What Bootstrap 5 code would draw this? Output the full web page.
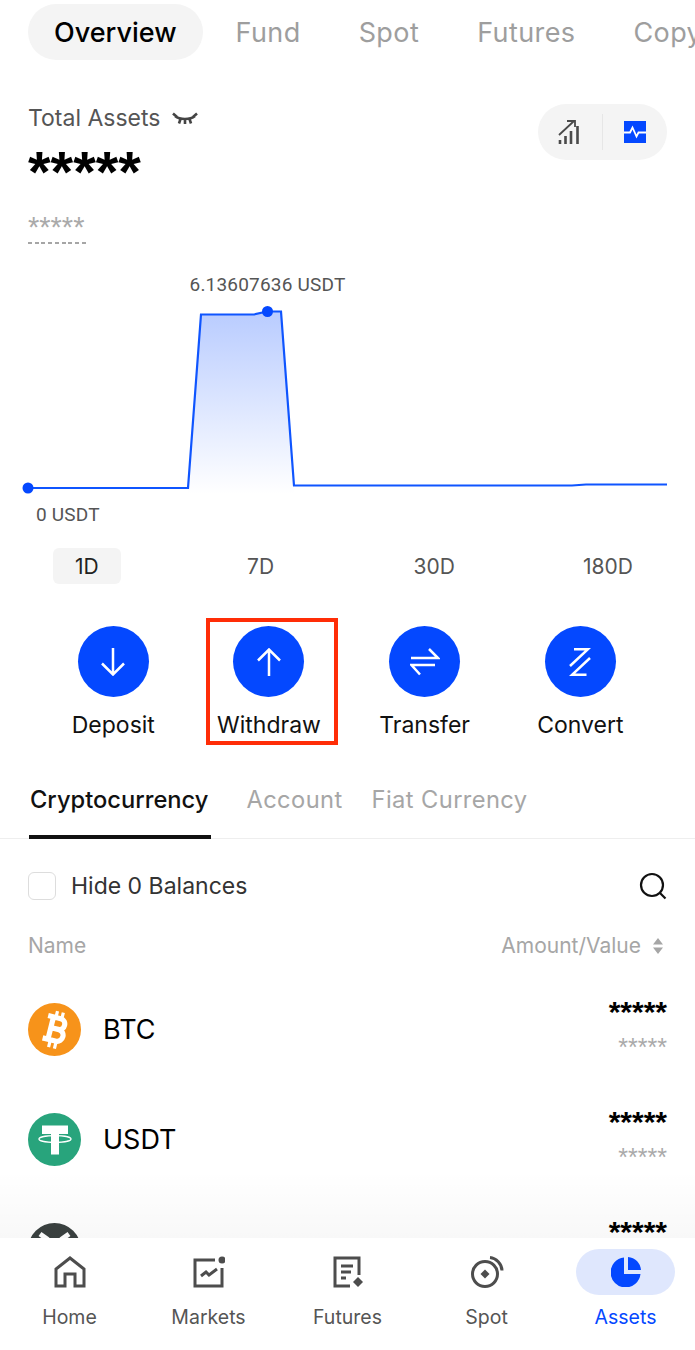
<!DOCTYPE html>
<html lang="en">
<head>
<meta charset="utf-8">
<title>Assets</title>
<link href="https://cdn.jsdelivr.net/npm/bootstrap@5.3.0/dist/css/bootstrap.min.css" rel="stylesheet">
<style>
html,body{height:1350px;overflow:hidden;background:#fff}
body{font-family:Inter,"Liberation Sans",sans-serif;color:#000;position:relative;width:695px}
.top-tabs{height:64px;padding:4px 0 0 28px;overflow:hidden;white-space:nowrap;align-items:flex-start}
.top-tab{font-size:27px;line-height:58px;height:56px;color:#9e9e9e;margin-right:58px;flex:none;letter-spacing:.4px}
.top-tab.on{background:#f4f4f4;color:#000;font-weight:500;border-radius:28px;padding:0 26px;margin-right:33px;letter-spacing:0}
.assets-head{height:126px;padding:0 28px}
.ta-label{font-size:23px;line-height:28px;color:#555;margin-top:40px;white-space:nowrap}
.ta-val{font-size:58px;line-height:58px;font-weight:700;margin-top:11px;font-family:"Liberation Sans",sans-serif;height:58px}
.ta-sub{font-size:29px;line-height:29px;color:#aaa;width:58px;margin-top:12px;height:31px;background:repeating-linear-gradient(90deg,#a6a6a6 0 4px,transparent 4px 6.750px) left bottom/100% 2px no-repeat;font-family:"Liberation Sans",sans-serif;white-space:nowrap}
.view-toggle{width:129px;height:56px;background:#f4f4f4;border-radius:28px;margin-top:40px;flex:none;padding-left:20px}
.view-div{width:1px;height:36px;background:#e6e6e6;margin:0 21px 0 20px}
.chart-box{height:358px}
.chart-box svg{display:block}
.range-row{height:36px}
.range-cell{width:173.700px;text-align:center;font-size:21px;color:#555;line-height:37px;height:36px;flex:none}
.range-on{display:inline-block;width:68px;height:36px;background:#f4f4f4;border-radius:6px;color:#222}
.act-row{height:132px;margin-top:42px;padding-left:35.500px}
.act{width:155.670px;flex:none;text-align:center;font-size:23px;line-height:28px;color:#111}
.act-circle{width:71px;height:71px;border-radius:50%;background:#0448ff;margin:0 auto 14px;display:flex;align-items:center;justify-content:center}
.mark-box{position:absolute;left:206px;top:618px;width:132px;height:127px;border:4px solid #ff2d07;pointer-events:none}
.sub-tabs{height:76px;padding:0 28px;border-bottom:1px solid #eee;margin-top:5px;gap:36px}
.sub-tab{font-size:23.700px;line-height:74px;color:#a6a6a6;flex:none;letter-spacing:.4px}
.sub-tab.on{color:#111;font-weight:500;border-bottom:4px solid #111;height:76px;letter-spacing:0;padding:0 3px 0 1px;margin-left:1px}
.sub-tab.acct{margin-left:-1px}
.sub-tab.tight{margin-left:-7px}
.filter-row{height:92px;padding:2px 28px 0}
.chk{width:28px;height:28px;border:1px solid #ddd;border-radius:6px;margin-right:15px}
.filter-row span{font-size:23px;color:#333}
.col-head{height:26px;padding:0 32px 0 28px;margin-top:2px;font-size:21px;line-height:26px;color:#a6a6a6}
.coin-list{padding-top:15px}
.coin-row{height:110px;padding:0 28px}
.coin-name{font-size:27px;margin-left:22px;color:#000;line-height:34px;padding-top:1px}
.coin-ic{width:53px;height:53px;flex:none}
.coin-val{text-align:right;font-family:"Liberation Sans",sans-serif;padding-bottom:2px}
.cv1{font-size:30px;line-height:30px;font-weight:700;height:26px}
.cv2{font-size:25px;line-height:25px;color:#aaa;margin-top:12px}
.fade-band{position:absolute;left:0;right:0;top:1170px;height:68px;background:linear-gradient(rgba(0,0,0,0),rgba(0,0,0,.028));pointer-events:none}
.bottom-nav{position:absolute;left:0;right:0;top:1238px;height:112px;background:#fff}
.nav-cell{width:139px;flex:none;text-align:center;font-size:19.500px;line-height:24px;color:#555}
.nav-ic{height:46px;margin:11px auto 10px;width:99px;border-radius:23px;display:flex;align-items:center;justify-content:center}
.nav-cell.on{color:#0448ff}
.nav-cell.on .nav-ic{background:#dfe7fd}
</style>
</head>
<body>
<div class="top-tabs d-flex">
  <div class="top-tab on">Overview</div>
  <div class="top-tab">Fund</div>
  <div class="top-tab">Spot</div>
  <div class="top-tab">Futures</div>
  <div class="top-tab">Copy</div>
</div>

<div class="assets-head d-flex justify-content-between">
  <div>
    <div class="ta-label d-flex align-items-center gap-2">Total Assets
      <svg width="26" height="14" viewBox="0 0 26 14" fill="none" stroke="#444" stroke-width="2.600" class="ms-1"><path d="M3 5C8 9 18 9 23 5M1 2.500L5 6M25 2.500L21 6M8.500 8L7 12.500M17.500 8L19 12.500M13 9V13"/></svg>
    </div>
    <div class="ta-val">*****</div>
    <div class="ta-sub">*****</div>
  </div>
  <div class="view-toggle d-flex align-items-center">
    <svg width="24" height="24" viewBox="0 0 24 24" fill="none" stroke="#4a4a4a"><path d="M1 15L16 1M9 1H17V7" stroke-width="1.800"/><path d="M2 20V24M7.500 16V24M13 11V24M19.500 6V24" stroke-width="2.600"/></svg>
    <div class="view-div"></div>
    <svg width="22" height="22" viewBox="0 0 22 22"><rect width="22" height="22" fill="#0448ff"/><path d="M0 11.500H6L8.500 6.500L12.500 15.500L14.500 11.500H22" fill="none" stroke="#fff" stroke-width="1.800"/></svg>
  </div>
</div>

<div class="chart-box">
<svg width="695" height="358" viewBox="0 0 695 358">
  <defs><linearGradient id="cf" x1="0" y1="0" x2="0" y2="1"><stop offset="0" stop-color="#0448ff" stop-opacity=".28"/><stop offset="1" stop-color="#0448ff" stop-opacity="0"/></linearGradient></defs>
  <path d="M188 298L201 124H254L267 121.500L281 121.500L294 295.500V304H188Z" fill="url(#cf)"/>
  <path d="M28 298H188L201 124.500H254L267 121.500H281L294 295.500H572L586 294.500H667" fill="none" stroke="#0f55ff" stroke-width="2.200"/>
  <circle cx="28" cy="298" r="5.500" fill="#0448ff"/>
  <circle cx="267.500" cy="121.500" r="5.500" fill="#0448ff"/>
  <text x="267.500" y="101" text-anchor="middle" font-family="Roboto,sans-serif" font-size="19" fill="#555" letter-spacing=".2">6.13607636 USDT</text>
  <text x="36" y="331" font-family="Roboto,sans-serif" font-size="19" fill="#555" letter-spacing=".2">0 USDT</text>
</svg>
</div>

<div class="range-row d-flex">
  <div class="range-cell"><span class="range-on">1D</span></div>
  <div class="range-cell">7D</div>
  <div class="range-cell">30D</div>
  <div class="range-cell">180D</div>
</div>

<div class="act-row d-flex">
  <div class="act"><div class="act-circle"><svg width="24" height="28" viewBox="0 0 24 28" fill="none" stroke="#fff" stroke-width="2.500"><path d="M12 0V26.500M1 15.500L12 26.500L23 15.500"/></svg></div>Deposit</div>
  <div class="act"><div class="act-circle"><svg width="24" height="28" viewBox="0 0 24 28" fill="none" stroke="#fff" stroke-width="2.500"><path d="M12 28V1.500M1 12.500L12 1.500L23 12.500"/></svg></div>Withdraw</div>
  <div class="act"><div class="act-circle"><svg width="30" height="28" viewBox="0 0 30 28" fill="none" stroke="#fff" stroke-width="2.500"><path d="M1 10H28L19 1M25 17H1.500L10 26.500"/></svg></div>Transfer</div>
  <div class="act"><div class="act-circle"><svg width="22" height="28" viewBox="0 0 22 28" fill="none" stroke="#fff" stroke-width="2.500"><path d="M5 1.200H19L1 18M21 10L3 26.800H17.500"/></svg></div>Convert</div>
</div>
<div class="mark-box"></div>

<div class="sub-tabs d-flex">
  <div class="sub-tab on">Cryptocurrency</div>
  <div class="sub-tab acct">Account</div>
  <div class="sub-tab tight">Fiat Currency</div>
</div>

<div class="filter-row d-flex align-items-center">
  <div class="chk"></div><span>Hide 0 Balances</span>
  <svg class="ms-auto" width="28" height="28" viewBox="0 0 28 28" fill="none" stroke="#111" stroke-width="2.200"><circle cx="13" cy="13" r="11"/><path d="M21 21L26.500 26.500"/></svg>
</div>

<div class="col-head d-flex justify-content-between align-items-center">
  <div>Name</div>
  <div class="d-flex align-items-center gap-2">Amount/Value
    <svg class="ms-1" width="10" height="18" viewBox="0 0 10 18" fill="#a6a6a6"><path d="M5 1L10 7.500H0ZM5 17L0 10.500H10Z"/></svg>
  </div>
</div>

<div class="coin-list">
  <div class="coin-row d-flex align-items-center">
    <svg class="coin-ic" viewBox="0 0 53 53"><circle cx="26.500" cy="26.500" r="26.500" fill="#f7931a"/><g fill="none" stroke="#fff" stroke-linejoin="round" transform="rotate(14 26.500 26.500)"><path d="M17 14.500H30C37 14.500 37 25.500 30 25.500H22M30 25.500C38.500 25.500 38.500 37.500 30 37.500H17M22.500 14.500V37.500" stroke-width="5.200"/><path d="M25 8V15M31 8V15M25 37V45M31 37V45" stroke-width="3.200"/></g></svg>
    <div class="coin-name">BTC</div>
    <div class="coin-val ms-auto"><div class="cv1">*****</div><div class="cv2">*****</div></div>
  </div>
  <div class="coin-row d-flex align-items-center">
    <svg class="coin-ic" viewBox="0 0 53 53"><circle cx="26.500" cy="26.500" r="26.500" fill="#28a47c"/><path d="M14 12.500H40V21H31V41.500H23V21H14Z" fill="#fff"/><ellipse cx="27" cy="26" rx="16" ry="3.400" fill="none" stroke="#fff" stroke-width="1.300"/></svg>
    <div class="coin-name">USDT</div>
    <div class="coin-val ms-auto"><div class="cv1">*****</div><div class="cv2">*****</div></div>
  </div>
  <div class="coin-row d-flex align-items-center">
    <svg class="coin-ic" viewBox="0 0 53 53"><circle cx="26.500" cy="26.500" r="26.500" fill="#3a4140"/><path d="M12 11L19 16L26.500 23L34 16L41 11" fill="none" stroke="#fff" stroke-width="5"/></svg>
    <div class="coin-val ms-auto"><div class="cv1">*****</div><div class="cv2">*****</div></div>
  </div>
</div>

<div class="fade-band"></div>
<div class="bottom-nav d-flex">
  <div class="nav-cell"><div class="nav-ic"><svg width="32" height="32" viewBox="0 0 32 32" fill="none" stroke="#4d4d4d" stroke-width="3"><path d="M2 30V13L16 2L30 13V30H21V18H11V30Z"/></svg></div>Home</div>
  <div class="nav-cell"><div class="nav-ic"><svg width="32" height="32" viewBox="0 0 32 32" fill="none" stroke="#4d4d4d" stroke-width="3"><path d="M22 4H2V30H29V12"/><path d="M8 20L13 16L16 19L24 13"/><circle cx="29" cy="4" r="3.500" fill="#4d4d4d" stroke="none"/></svg></div>Markets</div>
  <div class="nav-cell"><div class="nav-ic"><svg width="32" height="32" viewBox="0 0 32 32" fill="none" stroke="#4d4d4d" stroke-width="3"><path d="M18 30H3V2H27V19"/><path d="M9 10H21M9 16H19M9 22H14"/><path d="M26 21L31 26L26 31L21 26Z" fill="#4d4d4d" stroke="none"/></svg></div>Futures</div>
  <div class="nav-cell"><div class="nav-ic"><svg width="34" height="34" viewBox="0 0 34 34" fill="none" stroke="#4d4d4d" stroke-width="3"><circle cx="15" cy="19" r="12.500"/><path d="M20 2.500C26 3 32 9 32 15.500"/><path d="M15 14.500L19.500 19L15 23.500L10.500 19Z" fill="#4d4d4d" stroke="none"/></svg></div>Spot</div>
  <div class="nav-cell on"><div class="nav-ic"><svg width="30" height="30" viewBox="0 0 30 30"><path d="M13 0.500V17H29.500A15 15 0 1 1 13 0.500Z" fill="#0448ff"/><path d="M17 0C24 .5 29.500 6 30 13H17Z" fill="#0448ff"/></svg></div>Assets</div>
</div>
<script src="https://cdn.jsdelivr.net/npm/bootstrap@5.3.0/dist/js/bootstrap.bundle.min.js"></script>
</body>
</html>
